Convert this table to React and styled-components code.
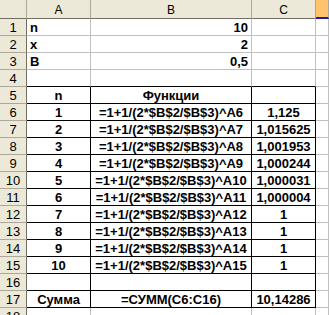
import React from 'react';
import styled, { createGlobalStyle } from 'styled-components';

const Global = createGlobalStyle`
    html, body {
        margin: 0;
        padding: 0;
        background: #ffffff;
        overflow: hidden;
    }
`;

const Sheet = styled.div`
    display: grid;
    grid-template-columns: 27px 64px 161px 64px 1fr;
    grid-template-rows: 19px;
    grid-auto-rows: 17px;
    width: 329px;
    height: 315px;
    overflow: hidden;
    font-family: "Liberation Sans", Arial, sans-serif;
    font-size: 13px;
    color: #000;
`;

const Corner = styled.div`
    box-sizing: border-box;
    background: #ECE9D8;
    border-right: 1px solid #ACA899;
    border-bottom: 1px solid #716F64;
`;

const ColHead = styled.div`
    box-sizing: border-box;
    display: flex;
    align-items: center;
    justify-content: center;
    background: ${p => (p.$hot ? '#FFC36E' : '#ECE9D8')};
    border-right: 1px solid #ACA899;
    border-bottom: ${p => (p.$hot ? '2px solid #1C1CA8' : '1px solid #716F64')};
    font-size: 12px;
    padding-top: 1px;
`;

const RowHead = styled.div`
    box-sizing: border-box;
    display: flex;
    align-items: center;
    justify-content: center;
    background: #ECE9D8;
    border-right: 1px solid #716F64;
    border-bottom: 1px solid #ACA899;
    font-size: 13px;
`;

const Cell = styled.div`
    box-sizing: border-box;
    display: flex;
    align-items: center;
    justify-content: ${p =>
        p.$align === 'right' ? 'flex-end' : p.$align === 'center' ? 'center' : 'flex-start'};
    padding: 0 3px;
    white-space: nowrap;
    overflow: hidden;
    font-weight: ${p => (p.$bold ? 'bold' : 'normal')};
    border-right: 1px solid ${p => (p.$boxR ? '#000' : '#C0C0C0')};
    border-bottom: 1px solid ${p => (p.$boxB ? '#000' : '#C0C0C0')};
`;

const formulas = Array.from({ length: 10 }, (_, i) => `=1+1/(2*$B$2/$B$3)^A${i + 6}`);
const results = ['1,125', '1,015625', '1,001953', '1,000244', '1,000031', '1,000004', '1', '1', '1', '1'];

const rows = [
    [['n', 'left'], ['10', 'right'], ['', '']],
    [['x', 'left'], ['2', 'right'], ['', '']],
    [['B', 'left'], ['0,5', 'right'], ['', '']],
    [['', ''], ['', ''], ['', '']],
    [['n', 'center'], ['Функции', 'center'], ['', 'center']],
    ...formulas.map((f, i) => [[String(i + 1), 'center'], [f, 'center'], [results[i], 'center']]),
    [['', ''], ['', ''], ['', '']],
    [['Сумма', 'center'], ['=СУММ(C6:C16)', 'center'], ['10,14286', 'center']],
    [['', ''], ['', ''], ['', '']],
];

export default function App() {
    return (
        <>
            <Global />
            <Sheet>
                <Corner />
                <ColHead>A</ColHead>
                <ColHead>B</ColHead>
                <ColHead>C</ColHead>
                <ColHead $hot />
                {rows.map((cells, r) => {
                    const n = r + 1;
                    const inTable = n >= 5 && n <= 17;
                    const edgeAbove = n === 4;
                    return (
                        <React.Fragment key={n}>
                            <RowHead>{n}</RowHead>
                            {cells.map(([text, align], c) => (
                                <Cell
                                    key={c}
                                    $align={align}
                                    $bold
                                    $boxR={inTable}
                                    $boxB={inTable || edgeAbove}
                                >
                                    {text}
                                </Cell>
                            ))}
                            <Cell />
                        </React.Fragment>
                    );
                })}
            </Sheet>
        </>
    );
}
